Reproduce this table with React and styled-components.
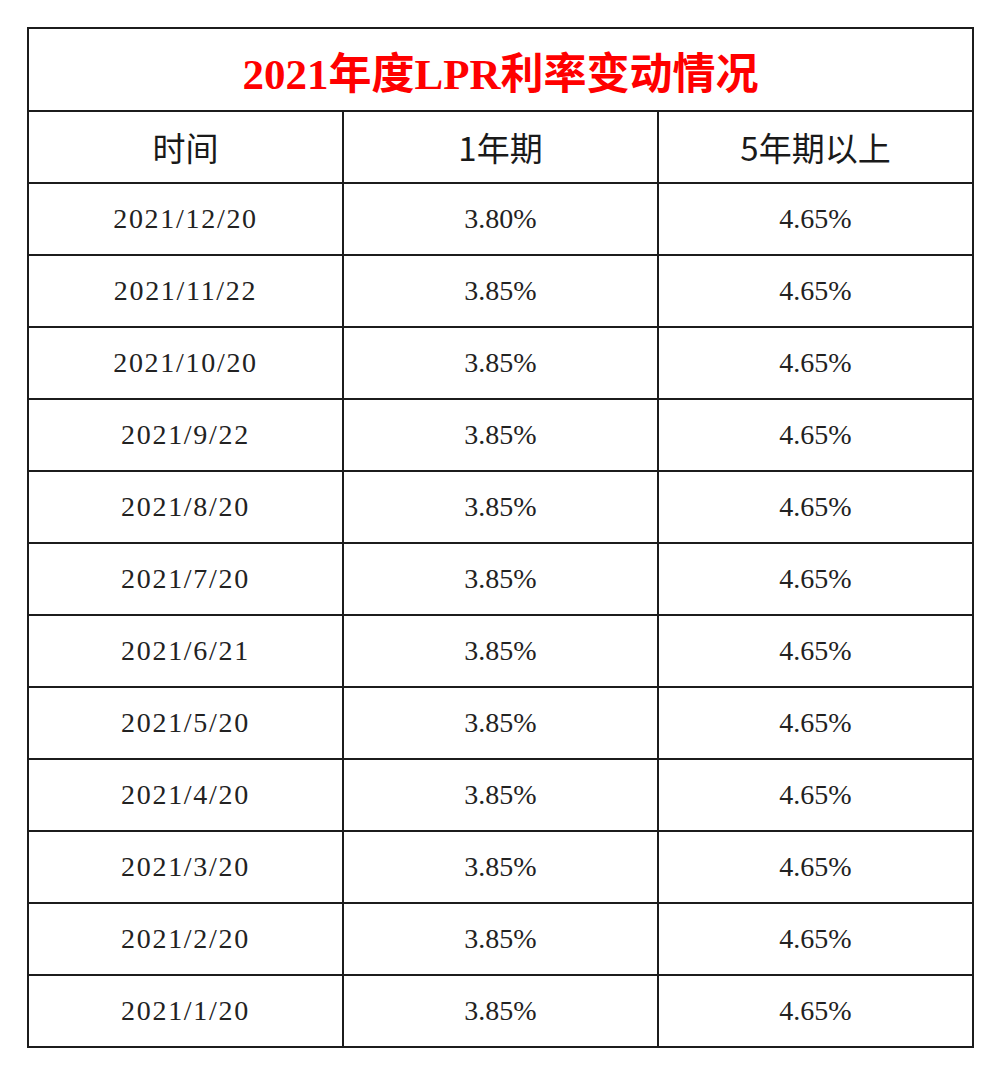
import React from 'react';
import styled, { createGlobalStyle } from 'styled-components';

const GlobalStyle = createGlobalStyle`
  html, body {
    margin: 0;
    padding: 0;
    background: #ffffff;
  }
`;

const Page = styled.div`
  padding: 27px 0 0 27px;
  width: 1000px;
  box-sizing: border-box;
`;

const Table = styled.table`
  width: 946px;
  border-collapse: collapse;
  table-layout: fixed;
  border: 2px solid #1c1c1c;
`;

const Cell = styled.td`
  border: 2px solid #1c1c1c;
  text-align: center;
  vertical-align: middle;
  padding: 0;
  color: #222;
  height: ${(p) => p.$h || 70}px;
  font-family: "Liberation Serif", "Noto Sans CJK SC", serif;
  font-size: 28px;
  letter-spacing: ${(p) => (p.$spread ? '1.7px' : '0')};
`;

const TitleCell = styled(Cell)`
  color: #ff0000;
  font-weight: 700;
  font-size: 43px;
  font-family: "Liberation Serif", "Noto Sans CJK SC", serif;
`;

const HeadCell = styled(Cell)`
  font-family: "Noto Sans CJK SC", "Liberation Sans", sans-serif;
  font-size: 33px;
  font-weight: 400;
  color: #1a1a1a;
`;

const rows = [
  ['2021/12/20', '3.80%', '4.65%'],
  ['2021/11/22', '3.85%', '4.65%'],
  ['2021/10/20', '3.85%', '4.65%'],
  ['2021/9/22', '3.85%', '4.65%'],
  ['2021/8/20', '3.85%', '4.65%'],
  ['2021/7/20', '3.85%', '4.65%'],
  ['2021/6/21', '3.85%', '4.65%'],
  ['2021/5/20', '3.85%', '4.65%'],
  ['2021/4/20', '3.85%', '4.65%'],
  ['2021/3/20', '3.85%', '4.65%'],
  ['2021/2/20', '3.85%', '4.65%'],
  ['2021/1/20', '3.85%', '4.65%'],
];

export default function App() {
  return (
    <Page>
      <GlobalStyle />
      <Table>
        <colgroup>
          <col style={{ width: '315px' }} />
          <col style={{ width: '315px' }} />
          <col style={{ width: '315px' }} />
        </colgroup>
        <tbody>
          <tr>
            <TitleCell colSpan={3} $h={81}>2021年度LPR利率变动情况</TitleCell>
          </tr>
          <tr>
            <HeadCell>时间</HeadCell>
            <HeadCell>1年期</HeadCell>
            <HeadCell>5年期以上</HeadCell>
          </tr>
          {rows.map((r) => (
            <tr key={r[0]}>
              {r.map((v, i) => (
                <Cell key={i} $spread={i === 0}>{v}</Cell>
              ))}
            </tr>
          ))}
        </tbody>
      </Table>
    </Page>
  );
}
